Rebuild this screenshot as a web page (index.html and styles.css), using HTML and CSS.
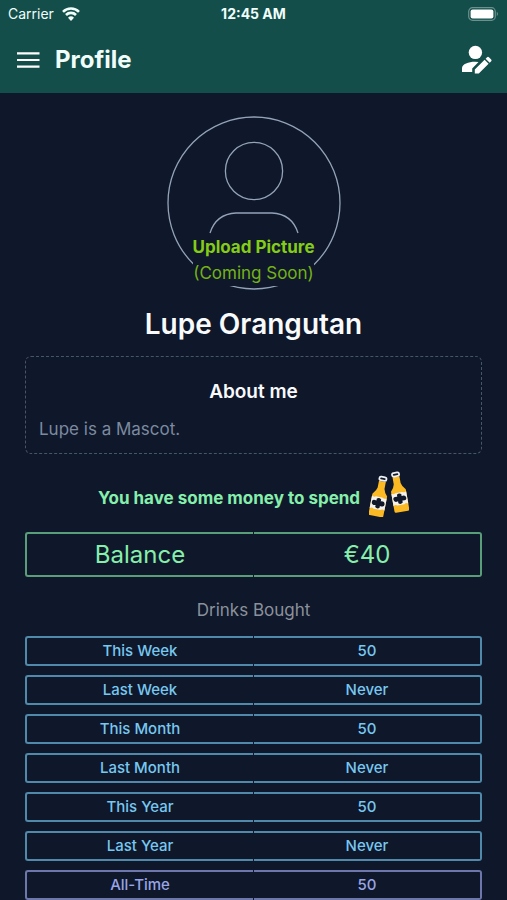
FILE: index.html
```html
<!DOCTYPE html>
<html lang="en">
<head>
<meta charset="utf-8">
<meta name="viewport" content="width=device-width, initial-scale=1">
<title>Profile</title>
<link rel="stylesheet" href="styles.css">
</head>
<body>
<header class="header">
  <div class="status">
    <div class="carrier"><span>Carrier</span>
      <svg width="18" height="14" viewBox="0 0 18 14" fill="none" stroke="currentColor" stroke-width="2.6" aria-hidden="true"><path d="M1 4.8a11.3 11.3 0 0 1 16 0M4 8a7 7 0 0 1 10 0"/><path d="M9 14 6 10.7a4.3 4.3 0 0 1 6 0z" fill="currentColor" stroke="none"/></svg>
    </div>
    <span class="time">12:45 AM</span>
    <svg class="battery" width="31" height="14" viewBox="0 0 31 14" aria-hidden="true"><rect x=".7" y=".7" width="26.6" height="12.6" rx="3.8" fill="none" stroke="#6b918d" stroke-width="1.2"/><rect x="2.6" y="2.5" width="22.8" height="9" rx="2" fill="#fff"/><path d="M28.8 4.8q2 2.2 0 4.4z" fill="#7f9f9c"/></svg>
  </div>
  <div class="bar">
    <button class="icon-button" aria-label="Open menu"><svg width="24" height="16" viewBox="0 0 24 16" stroke="currentColor" stroke-width="2.2" aria-hidden="true"><path d="M1 1.4h22.5M1 8h22.5M1 14.6h22.5"/></svg></button>
    <h1 class="title">Profile</h1>
    <button class="icon-button edit" aria-label="Edit profile"><svg width="30" height="30" viewBox="0 0 30 30" fill="currentColor" aria-hidden="true"><circle cx="13.4" cy="7.4" r="6.7"/><path d="M0 27v-3.800C0 19.200 6.600 16.800 13 16.800q1.800 0 3.500.3L10.200 23.500V27z"/><path d="m12.800 24.500 9.800-9.800 4 4-9.800 9.800h-4zM23.600 13.700l1.500-1.500q.9-.8 1.800 0l2.300 2.300q.8.900 0 1.800l-1.500 1.500z"/></svg></button>
  </div>
</header>
<main class="content">
  <button class="avatar">
    <svg class="avatar-art" width="174" height="174" viewBox="0 0 174 174" fill="none" stroke="currentColor" stroke-width="1.3" aria-hidden="true"><circle cx="87" cy="87" r="86"/><circle cx="87" cy="55" r="28.600"/><path d="M43 117q6-19 26-20h36q20 1 26 20"/></svg>
    <span class="upload"><strong>Upload Picture</strong><span>(Coming Soon)</span></span>
  </button>
  <h2 class="name">Lupe Orangutan</h2>
  <section class="about">
    <h3>About me</h3>
    <p>Lupe is a Mascot.</p>
  </section>
  <div class="spend">
    <p>You have some money to spend</p>
    <svg width="40" height="46" viewBox="0 0 40 46" aria-hidden="true">
      <g transform="rotate(11 10 28)"><path d="M6.500 10h7v7q.4 3 4 7v20q0 1.500-1.500 1.500H4q-1.500 0-1.500-1.500V24q3.600-4 4-7z" fill="#fbb924"/><rect x="6.400" y="5.600" width="7.200" height="3.600" rx="1.800" fill="#10182a" stroke="#eef0f4" stroke-width="1.700"/><path d="M2.500 26q2 1.500 4 0h7q2 1.500 4 0v12.500q-2-1.500-4 0h-7q-2-1.500-4 0z" fill="#f3f2ee"/><path d="M7.800 28q2.200-1.800 4.400 0v2q4-1 4.300 2.300t-4.300 2.300v2q-2.200 1.800-4.400 0v-2q-4 1-4.300-2.300T7.800 30z" fill="#10182a"/></g>
      <g transform="rotate(-10 30 23)"><path d="M26.500 5.500h7v7q.4 3 4 7v20q0 1.500-1.500 1.500H24q-1.500 0-1.500-1.500v-20q3.600-4 4-7z" fill="#fbb924"/><rect x="26.400" y="1.400" width="7.200" height="3.600" rx="1.800" fill="#10182a" stroke="#eef0f4" stroke-width="1.700"/><path d="M22.500 21.500q2 1.500 4 0h7q2 1.500 4 0V34q-2-1.500-4 0h-7q-2-1.500-4 0z" fill="#f3f2ee"/><path d="M27.800 23.500q2.200-1.800 4.400 0v2q4-1 4.300 2.300t-4.300 2.300v2q-2.200 1.800-4.400 0v-2q-4 1-4.300-2.300t4.300-2.300z" fill="#10182a"/></g>
    </svg>
  </div>
  <table class="balance">
    <tbody><tr><th scope="row">Balance</th><td>€40</td></tr></tbody>
  </table>
  <table class="drinks">
    <caption>Drinks Bought</caption>
    <tbody>
      <tr><th scope="row">This Week</th><td>50</td></tr>
      <tr><th scope="row">Last Week</th><td>Never</td></tr>
      <tr><th scope="row">This Month</th><td>50</td></tr>
      <tr><th scope="row">Last Month</th><td>Never</td></tr>
      <tr><th scope="row">This Year</th><td>50</td></tr>
      <tr><th scope="row">Last Year</th><td>Never</td></tr>
      <tr class="total"><th scope="row">All-Time</th><td>50</td></tr>
    </tbody>
  </table>
</main>
</body>
</html>
```
FILE: styles.css
```css
* { box-sizing: border-box; }

body {
  margin: 0;
  background: #0f172a;
  color: #f8fafc;
  font-family: Inter, "Liberation Sans", sans-serif;
}

/* The page scrolls without a visible scrollbar, like a phone screen. */
html { scrollbar-width: none; }

h1, h2, h3, p { margin: 0; }

button {
  padding: 0;
  border: 0;
  background: none;
  color: inherit;
  font: inherit;
}

svg { display: block; }

.header {
  background: #134e4a;
  color: #f0fdfa;
}

.status {
  display: grid;
  grid-template-columns: 1fr auto 1fr;
  align-items: center;
  height: 27px;
  padding: 0 8px;
  font-size: 14px;
  line-height: 20px;
}

.carrier {
  display: flex;
  align-items: center;
  gap: 8px;
}

.time { font-weight: 700; }
.battery { justify-self: end; }

.bar {
  display: flex;
  align-items: center;
  gap: 15px;
  height: 66px;
  padding: 0 15px 0 16px;
}

.title {
  flex: 1;
  font-size: 24px;
  line-height: 32px;
  font-weight: 700;
}

.icon-button { color: #fff; }

.content { padding: 23px 24px; }

.avatar {
  position: relative;
  display: block;
  width: 174px;
  margin: 0 auto;
}

.avatar-art { color: #94a3b8; }

.upload {
  position: absolute;
  inset: auto 0 4px;
  display: flex;
  flex-direction: column;
  align-items: center;
  color: #84cc16;
  font-size: 17px;
  line-height: 26px;
}

.upload > * { background: #0f172a; }

.upload > span { color: #74b217; }

.name {
  margin-top: 16px;
  font-size: 28px;
  line-height: 36px;
  font-weight: 600;
  text-align: center;
}

.about {
  margin: 14px 1px 0;
  padding: 19px 13px 9px;
  border: 1px dashed #475569;
  border-radius: 6px;
}

.about h3 {
  font-size: 19px;
  line-height: 32px;
  font-weight: 600;
  text-align: center;
}

.about p {
  margin-top: 6px;
  color: #7c8aa0;
  font-size: 17px;
  line-height: 30px;
}

.spend {
  display: flex;
  justify-content: center;
  align-items: center;
  gap: 9px;
  margin: 17px 0 15px;
  color: #86efac;
  font-size: 17px;
  line-height: 24px;
  font-weight: 700;
}

.spend p { padding-top: 8px; }

table {
  width: 100%;
  table-layout: fixed;
  border-collapse: separate;
  text-align: center;
}

th, td {
  padding: 0;
  border: 2px solid currentColor;
  font-weight: 500;
}

th {
  border-right: 0;
  border-radius: 3px 0 0 3px;
}

td {
  border-left: 0;
  border-radius: 0 3px 3px 0;
}

.balance {
  border-spacing: 1px 0;
  color: #86efac;
  font-size: 24px;
  line-height: 41px;
}

.balance th, .balance td {
  border-color: #5a9e79;
  font-weight: 400;
}

.drinks {
  margin-top: 17px;
  border-spacing: 1px 9px;
  color: #77c8f0;
  font-size: 15px;
  line-height: 26px;
}

.drinks caption {
  padding-bottom: 1px;
  color: #8b919b;
  font-size: 17px;
  line-height: 32px;
}

.drinks th, .drinks td { border-color: #5089aa; }
.drinks .total { color: #98a5e6; }
.drinks .total th, .drinks .total td { border-color: #6d77ac; }
```
